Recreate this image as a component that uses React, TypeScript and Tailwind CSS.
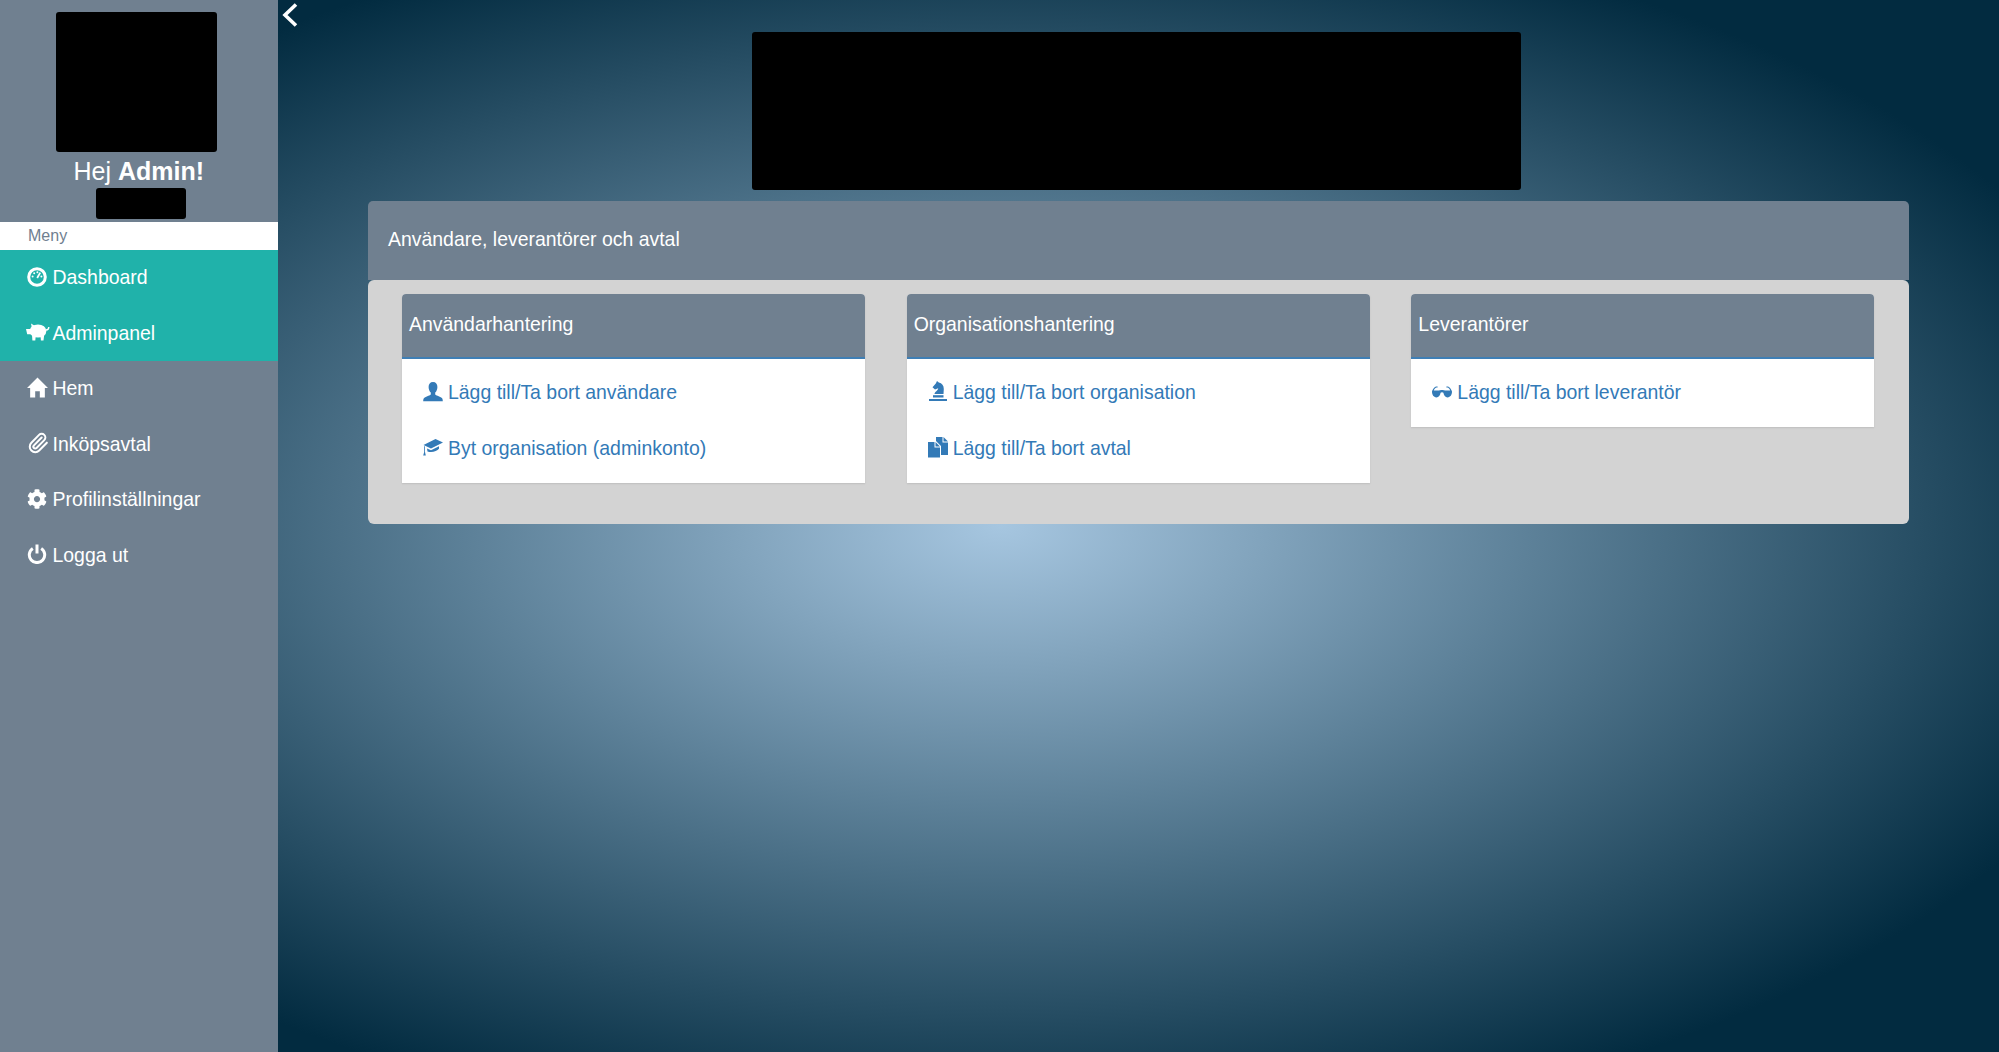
import type { ReactNode } from "react";
import { FaCog } from "react-icons/fa";
import { Paperclip } from "lucide-react";

const IconDashboard = () => (
  <svg viewBox="0 0 20 20" className="h-[20px] w-[20px]" fill="none">
    <circle cx="10" cy="10" r="8.3" stroke="currentColor" strokeWidth="3" />
    <circle cx="5.6" cy="9.4" r="1" fill="currentColor" />
    <circle cx="7.2" cy="6.2" r="1" fill="currentColor" />
    <circle cx="10.4" cy="5.2" r="1" fill="currentColor" />
    <circle cx="14.4" cy="9.4" r="1" fill="currentColor" />
    <path d="M13.2 5.600 10.200 11" stroke="currentColor" strokeWidth="1.800" />
  </svg>
);

const IconPiggy = () => (
  <svg viewBox="0 0 24 18" className="h-[18px] w-[24px]" fill="currentColor">
    <ellipse cx="12" cy="8" rx="8.4" ry="6.600" />
    <path d="M0 6h5v5.200H1.200zM5 .5l4.500 2.700-3.300 3.300zM6 12h3.800l-.5 5.500H6.400zM14.500 12h3.700l-.7 5.500h-2.600z" />
    <path d="M20 7c1.600 0 2.800-1 2.800-3" fill="none" stroke="currentColor" strokeWidth="1.400" />
  </svg>
);

const IconHome = () => (
  <svg viewBox="0 0 20 20" className="h-[21px] w-[21px]" fill="currentColor">
    <path d="M10 .5 20 10.500h-3v9h-4.800v-6H7.800v6H3v-9H0z" />
  </svg>
);

const IconPower = () => (
  <svg viewBox="0 0 20 20" className="h-[20px] w-[20px]" fill="none" stroke="currentColor" strokeWidth="3">
    <path d="M5.800 4.400a7.700 7.700 0 1 0 8.400 0" />
    <path d="M10 .5v9" />
  </svg>
);

const IconUser = () => (
  <svg viewBox="0 0 20 20" className="h-[20px] w-[20px]" fill="currentColor">
    <path d="M10 0c2.900 0 4.400 2.100 4.400 4.900 0 2.400-1 4.600-2.200 5.700v1.600c0 1 4.300 2 6.400 3.600.8.600 1.200 1.600 1.200 3.400H.2c0-1.800.4-2.800 1.200-3.400 2.100-1.600 6.400-2.600 6.400-3.600v-1.600c-1.200-1.100-2.200-3.300-2.200-5.700C5.600 2.100 7.100 0 10 0z" />
  </svg>
);

const IconCap = () => (
  <svg viewBox="0 0 20 17" className="h-[17px] w-[20px]" fill="currentColor">
    <path d="M.5 6 12.500 0 20 3.600 8 9.600z" />
    <path d="M4 9.400 8 11.300l8-4v2.500c-2 2.600-7.500 4.200-11.500 2.600z" />
    <path d="M1.200 7v6L.2 16.500h2.600L2 13V7.500z" />
  </svg>
);

const IconKnight = () => (
  <svg viewBox="0 0 20 21" className="h-[21px] w-[20px]" fill="currentColor">
    <path d="M9 0l1.800 1.500c3.200.5 5 3 5 6.500l-.3 5H6.500c0-2.500 3.700-3.300 3.700-5.800L7 8.500 4.500 6.300l3.300-3.700z" />
    <path d="M5 14.200h10.500v2.300H5z" />
    <path d="M1 18h18v2H1z" />
  </svg>
);

const IconDuplicate = () => (
  <svg viewBox="0 0 20 21" className="h-[21px] w-[20px]" fill="currentColor">
    <path d="M8 0h6.500v5.500H20V18h-7V9L8 4z" />
    <path d="M15.500 0 20 4.500h-4.500z" />
    <path d="M0 5h6.500v5.500H12v10H0z" />
    <path d="M7.500 5 12 9.500H7.500z" />
  </svg>
);

const IconGlasses = () => (
  <svg viewBox="0 0 20 12" className="h-[12px] w-[20px]" fill="currentColor">
    <path d="M0 5.600C0 4.700 2.200.4 4.200.4h1.400v1.200H4.600C3.400 1.600 2.400 3 1.800 4.400h5.400c.7 0 1.200-.3 2.800-.3s2.100.3 2.800.3h5.400C17.600 3 16.600 1.600 15.400 1.600h-1V.4h1.400C17.800.4 20 4.700 20 5.600c0 3.400-1.600 5.800-4.400 5.800-2.400 0-3.800-2.200-4.200-4.600-.3-.7-2.500-.7-2.800 0-.4 2.400-1.800 4.600-4.200 4.600C1.600 11.400 0 9 0 5.600z" />
  </svg>
);

const IconBack = () => (
  <svg viewBox="0 0 16 24" className="h-[24px] w-[16px]" fill="none" stroke="currentColor" strokeWidth="3.600">
    <path d="M14 1.500 3 12l11 10.500" />
  </svg>
);

function NavRow({ icon, label, active }: { icon: ReactNode; label: string; active?: boolean }) {
  return (
    <a className={active ? "flex h-[55.5px] items-center bg-[#20b2aa] pl-[27px] text-white" : "flex h-[55.5px] items-center pl-[27px] text-white"}>
      <span className="flex w-[25.5px] items-center justify-start -translate-y-[1px]">{icon}</span>
      <span>{label}</span>
    </a>
  );
}

function LinkRow({ icon, label }: { icon: ReactNode; label: string }) {
  return (
    <a className="flex h-[55.5px] items-center pl-[21px] text-[#337ab7]">
      <span className="flex w-[25px] items-center -translate-y-[1px]">{icon}</span>
      <span>{label}</span>
    </a>
  );
}

function Card({ title, children }: { title: string; children: ReactNode }) {
  return (
    <div className="self-start rounded-t-[4px] bg-white shadow-[0_1px_2px_rgba(0,0,0,0.1)]">
      <div className="flex h-[65px] items-center rounded-t-[4px] border-b-2 border-[#3f7fb5] bg-[#708090] pb-[1.5px] pl-[7px] text-white">
        {title}
      </div>
      <div className="pt-[6.5px] pb-[6.5px]">{children}</div>
    </div>
  );
}

export default function App() {
  return (
    <div className="flex h-[1052px] w-full overflow-hidden bg-[#022b40] bg-[radial-gradient(ellipse_at_center,#a6c6e0_0%,#022b40_84%)] font-['Liberation_Sans',Arial,sans-serif] text-[19.45px]">
      {/* Sidebar */}
      <aside className="flex w-[277.5px] shrink-0 flex-col bg-[#708090]">
        <div className="flex h-[222px] flex-col items-center pt-[12px]">
          <div className="-ml-[4px] h-[140px] w-[161px] rounded-[3px] bg-black" />
          <p className="mt-[1.5px] text-[25px] leading-[34px] text-white">
            Hej <b>Admin!</b>
          </p>
          <div className="ml-[5px] h-[31px] w-[90px] rounded-[3px] bg-black" />
        </div>
        <div className="flex h-[28px] items-center bg-white pl-[28px] text-[16px] text-[#708090]">Meny</div>
        <NavRow active icon={<IconDashboard />} label="Dashboard" />
        <NavRow active icon={<span className="-ml-[1.5px]"><IconPiggy /></span>} label="Adminpanel" />
        <NavRow icon={<IconHome />} label="Hem" />
        <NavRow icon={<Paperclip className="h-[22px] w-[22px]" strokeWidth={2.2} />} label="Inköpsavtal" />
        <NavRow icon={<FaCog className="h-[20px] w-[20px]" />} label="Profilinställningar" />
        <NavRow icon={<IconPower />} label="Logga ut" />
      </aside>

      {/* Main */}
      <main className="relative flex-1 px-[90.5px] pt-[31.5px]">
        <button className="absolute top-[3px] left-[4px] text-white">
          <IconBack />
        </button>
        <div className="mx-auto h-[158px] w-[769px] -translate-x-[2px] rounded-[3px] bg-black" />
        <div className="mt-[11px] flex h-[79px] items-center rounded-t-[5px] bg-[#708090] pl-[20px] text-white">
          Användare, leverantörer och avtal
        </div>
        <div className="grid h-[244.5px] grid-cols-3 gap-x-[41.5px] rounded-[6px] bg-[#d3d3d3] px-[34px] pt-[14px]">
          <Card title="Användarhantering">
            <LinkRow icon={<IconUser />} label="Lägg till/Ta bort användare" />
            <LinkRow icon={<IconCap />} label="Byt organisation (adminkonto)" />
          </Card>
          <Card title="Organisationshantering">
            <LinkRow icon={<IconKnight />} label="Lägg till/Ta bort organisation" />
            <LinkRow icon={<IconDuplicate />} label="Lägg till/Ta bort avtal" />
          </Card>
          <Card title="Leverantörer">
            <LinkRow icon={<IconGlasses />} label="Lägg till/Ta bort leverantör" />
          </Card>
        </div>
      </main>
    </div>
  );
}
